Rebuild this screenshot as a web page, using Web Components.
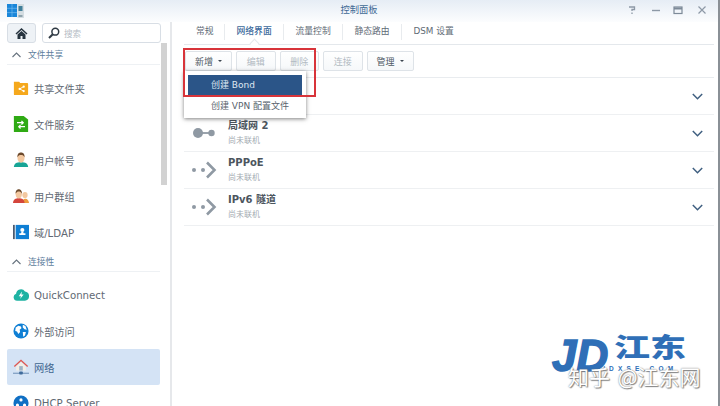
<!DOCTYPE html>
<html lang="zh">
<head>
<meta charset="utf-8">
<title>控制面板</title>
<style>
  html, body { margin: 0; padding: 0; background: #fff; }
  body { width: 720px; height: 406px; overflow: hidden; font-family: "DejaVu Sans", "Noto Sans CJK SC", sans-serif; font-size: 10px; color: #505a64; }
</style>
</head>
<body>
<template id="t-window">
  <style>
    :host { display: flex; flex-direction: column; position: relative; width: 718px; height: 406px; border-right: 2px solid #8a9096; overflow: hidden; background: #fff; }
    .body { display: flex; flex: 1; min-height: 0; }
  </style>
  <slot name="title"></slot>
  <div class="body"><slot></slot></div>
  <slot name="over"></slot>
</template>

<template id="t-titlebar">
  <style>
    :host { display: flex; align-items: center; height: 22px; flex: none; padding: 0 11px 0 7px; background: linear-gradient(#e6edf5, #fcfdfe); position: relative; }
    .name { position: absolute; left: 0; right: 0; top: 3px; text-align: center; font-size: 9.300px; line-height: 14px; color: #3f6a95; }
    .logo { position: relative; top: -.5px; }
    .tools { margin-left: auto; display: flex; position: relative; top: -1px; }
    svg { display: block; }
  </style>
  <svg class="logo" width="17" height="14" viewBox="0 0 17 14">
    <rect x="0" y="0" width="10" height="13" fill="#1a86d9"/>
    <path d="M0 4.300h10M0 8.600h10M5 0v13" stroke="#7cc0f0" stroke-width=".6"/>
    <rect x="10.500" y="0" width="6.500" height="14" fill="#d4dde2"/>
    <rect x="11.500" y="2" width="4" height="5" fill="#3f7f9a"/>
    <rect x="11.500" y="11" width="4" height="2" fill="#8fa3ad"/>
  </svg>
  <div class="name">控制面板</div>
  <div class="tools">
    <svg style="margin-right:13px" width="10" height="10" viewBox="0 0 10 10" fill="none" stroke="#8d99a6" stroke-width="1.300"><path d="M2 2h5.500v2.500H5v1.500M5 7.500v1.500"/></svg>
    <svg style="margin-right:11px" width="12" height="10" viewBox="0 0 12 10" fill="none" stroke="#8d99a6" stroke-width="1.400"><path d="M2 5.500h8"/></svg>
    <svg style="margin-right:14px" width="10" height="10" viewBox="0 0 10 10" fill="none" stroke="#7d8a98" stroke-width="1.200"><rect x="1" y="2" width="8" height="6.500"/><path d="M1 3.500h8" stroke-width="2"/></svg>
    <svg width="10" height="10" viewBox="0 0 10 10" fill="none" stroke="#8d99a6" stroke-width="1.200"><path d="M1.500 1.500l7 7M8.500 1.500l-7 7"/></svg>
  </div>
</template>

<template id="t-sidebar">
  <style>
    :host { display: block; flex: none; width: 172px; height: 384px; box-sizing: border-box; border-right: 2px solid #e6e8eb; position: relative; overflow: hidden; }
    .top { display: flex; gap: 6px; padding: 1px 0 0 7px; height: 21px; box-sizing: border-box; }
    .home, .search { box-sizing: border-box; height: 20px; border: 1px solid #d8dee5; border-radius: 3px; display: flex; align-items: center; }
    .home { width: 29px; justify-content: center; background: #eef2f6; }
    .search { width: 119px; padding-left: 5px; gap: 4px; color: #b3bbc4; font-size: 8.600px; background: #fff; }
    .list { width: 153px; margin-left: 7px; }
    .thumb { position: absolute; left: 161px; top: 21px; width: 6px; height: 142px; background: #d2d2d2; }
    svg { display: block; }
  </style>
  <div class="top">
    <div class="home"><svg width="13" height="13" viewBox="0 0 13 13"><path d="M6.500 1L0.500 6.500l1 1 5-4.500 5 4.500 1-1z" fill="#27343f"/><path d="M2.500 7.500l4-3.500 4 3.500V12H7.500V9h-2v3h-3z" fill="#27343f"/></svg></div>
    <div class="search"><svg width="12" height="12" viewBox="0 0 12 12" fill="none" stroke="#2f3a44" stroke-width="1.500"><circle cx="7.300" cy="4.700" r="3.400"/><path d="M4.800 7.200L1 11" stroke-width="2"/></svg><span>搜索</span></div>
  </div>
  <div class="list"><slot></slot></div>
  <div class="thumb"></div>
</template>

<template id="t-section">
  <style>
    :host { display: flex; align-items: center; gap: 7px; height: 22px; margin-bottom: 5px; box-sizing: border-box; padding: 2px 0 0 5px; border-bottom: 1px solid #eef1f4; color: #5d7e9c; font-size: 8.800px; }
    svg { display: block; }
  </style>
  <svg width="9" height="6" viewBox="0 0 9 6" fill="none" stroke="#66727e" stroke-width="1.100"><path d="M.5 5L4.500 1l4 4"/></svg>
  <slot></slot>
</template>

<template id="t-navitem">
  <style>
    :host { display: flex; align-items: center; gap: 5px; height: 36px; box-sizing: border-box; padding-left: 6px; font-size: 10.200px; color: #5f6973; border-radius: 2px; white-space: nowrap; }
    :host([selected]) { background: #d4e3f5; color: #3f6690; }
    .ic { width: 16px; height: 16px; flex: none; }
    ::slotted(svg) { display: block; width: 16px; height: 16px; }
  </style>
  <div class="ic"><slot name="icon"></slot></div>
  <slot></slot>
</template>

<template id="t-tabs">
  <style>
    :host { display: flex; align-items: center; height: 23px; box-sizing: border-box; border-bottom: 1px solid #e4e8ec; margin: 0 4px 0 12px; position: relative; padding-bottom: 2px; }
  </style>
  <slot></slot>
</template>

<template id="t-tab">
  <style>
    :host { display: block; position: relative; box-sizing: border-box; height: 16px; line-height: 15px; padding: 0 11.400px; font-size: 8.800px; color: #5f6b76; border-left: 1px solid #e8ebee; white-space: nowrap; }
    :host([first]) { border-left: 0; padding-left: 12px; padding-right: 10.500px; }
    :host([active]) { color: #3c6a9c; font-weight: 500; }
    :host([active])::after { content: ""; position: absolute; left: 50%; bottom: -7px; width: 6px; height: 6px; margin-left: -3px; background: #fff; border: 1px solid #e4e8ec; border-width: 1px 0 0 1px; transform: rotate(45deg); }
  </style>
  <slot></slot>
</template>

<template id="t-toolbar">
  <style>
    :host { display: flex; gap: 4px; height: 33px; box-sizing: border-box; padding: 6px 0 0 1px; border-bottom: 1px solid #e9ecef; margin-right: 4px; }
  </style>
  <slot></slot>
</template>

<template id="t-btn">
  <style>
    :host { display: flex; align-items: center; justify-content: center; gap: 5px; box-sizing: border-box; height: 20px; width: 39.500px; border: 1px solid #dee3e8; border-radius: 2px; background: linear-gradient(#fff, #f6f8fa); color: #4f5a65; font-size: 9px; white-space: nowrap; }
    :host([disabled]) { color: #b2bac2; }
    :host([menu]) { width: 47px; }
    .car { display: none; width: 0; height: 0; border: 2.500px solid transparent; border-top-color: #3c4650; border-bottom: 0; }
    :host([menu]) .car { display: block; }
  </style>
  <slot></slot><span class="car"></span>
</template>

<template id="t-row">
  <style>
    :host { display: flex; align-items: center; height: 37px; box-sizing: border-box; border-bottom: 1px solid #eef0f2; margin-right: 4px; padding: 0 11px 0 7px; }
    .ic { width: 26px; height: 20px; flex: none; margin-right: 11px; }
    .txt { flex: 1; display: flex; flex-direction: column; gap: 3px; margin-top: -1px; }
    .t { font-size: 10px; line-height: 13px; font-weight: 600; color: #4c555e; }
    .s { font-size: 8px; line-height: 11px; color: #a4abb2; }
    ::slotted(svg) { display: block; }
    svg { display: block; }
  </style>
  <div class="ic"><slot name="icon"></slot></div>
  <div class="txt"><div class="t"><slot></slot></div><div class="s"><slot name="sub"></slot></div></div>
  <svg width="11" height="7" viewBox="0 0 11 7" fill="none" stroke="#3f5f80" stroke-width="1.500"><path d="M.8 1l4.700 4.700L10.200 1"/></svg>
</template>

<template id="t-menu">
  <style>
    :host { position: absolute; left: 184px; top: 71px; width: 122px; height: 47px; box-sizing: border-box; padding: 4px 4px 0; background: #fff; box-shadow: 0 1px 4px rgba(0,0,0,.5); }
    .i { height: 20px; line-height: 20px; padding-left: 23px; font-size: 9px; color: #59636d; white-space: nowrap; }
    .i.on { background: #2b5588; color: #dfe8f2; }
    .i + .i { line-height: 22px; }
  </style>
  <div class="i on">创建 Bond</div>
  <div class="i">创建 VPN 配置文件</div>
</template>

<template id="t-mark">
  <style>
    :host { position: absolute; left: 552px; top: 335px; width: 160px; height: 60px; }
    .jd { position: absolute; left: 0; top: -4px; font: italic 700 44px/50px "Liberation Sans", sans-serif; color: #2f6fb7; -webkit-text-stroke: 1.500px #2f6fb7; }
    .dot { position: absolute; left: 39px; width: 4px; height: 4px; border-radius: 50%; background: #fff; }
    .cn { position: absolute; left: 62px; top: -3px; font: 900 36px/36px "Noto Sans CJK SC", sans-serif; color: #2f6fb7; white-space: nowrap; transform: scaleY(.74); transform-origin: 0 0; }
    .url { position: absolute; left: 51px; top: 30px; font: 700 6.500px/7px "Liberation Sans", sans-serif; letter-spacing: 4.200px; color: #2f6fb7; white-space: nowrap; }
    .wm { position: absolute; left: 16px; top: 27px; font: 400 21px/28px "Noto Sans CJK SC", sans-serif; word-spacing: 3px; color: #fff; text-shadow: 0 0 1.500px #666, 1px 1px 1px #888; white-space: nowrap; }
  </style>
  <div class="jd">JD</div>
  <div class="dot" style="top:13px"></div>
  <div class="dot" style="top:21px"></div>
  <div class="cn">江东</div>
  <div class="url">/DXSE.COM</div>
  <div class="wm">知乎 @江东网</div>
</template>

<template id="t-callout">
  <style>
    :host { position: absolute; left: 183px; top: 48px; width: 133px; height: 49px; box-sizing: border-box; border: 2px solid #d8343a; }
  </style>
</template>

<script>
  // every element is the same: clone its template into an open shadow root
  function define(tag, tpl) {
    customElements.define(tag, class extends HTMLElement {
      constructor() {
        super();
        this.attachShadow({mode: 'open'}).appendChild(document.getElementById(tpl).content.cloneNode(true));
      }
    });
  }
  define('dsm-window', 't-window');
  define('dsm-titlebar', 't-titlebar');
  define('dsm-sidebar', 't-sidebar');
  define('dsm-section', 't-section');
  define('dsm-navitem', 't-navitem');
  define('dsm-tabs', 't-tabs');
  define('dsm-tab', 't-tab');
  define('dsm-toolbar', 't-toolbar');
  define('dsm-btn', 't-btn');
  define('dsm-row', 't-row');
  define('dsm-menu', 't-menu');
  define('dsm-mark', 't-mark');
  define('dsm-callout', 't-callout');
</script>

<dsm-window>
  <dsm-titlebar slot="title"></dsm-titlebar>
  <dsm-sidebar>
    <dsm-section>文件共享</dsm-section>
    <dsm-navitem>
      <svg slot="icon" viewBox="0 0 18 18"><path d="M1 2h6l1 1.500h8a1 1 0 0 1 1 1V16a1 1 0 0 1-1 1H2a1 1 0 0 1-1-1z" fill="#f5a81c"/><path d="M12 7.500L7.500 10l4.500 2.500" fill="none" stroke="#fff" stroke-width="1"/><circle cx="12" cy="7.500" r="1.300" fill="#fff"/><circle cx="7.500" cy="10" r="1.300" fill="#fff"/><circle cx="12" cy="12.500" r="1.300" fill="#fff"/></svg>
      共享文件夹
    </dsm-navitem>
    <dsm-navitem>
      <svg slot="icon" viewBox="0 0 18 18"><path d="M1 0h11l5 4v14H1z" fill="#2faa14"/><path d="M4.500 7.500h7M9.500 5.500l2 2-2 2M13.500 12h-7M8.500 10l-2 2 2 2" fill="none" stroke="#fff" stroke-width="1.400"/></svg>
      文件服务
    </dsm-navitem>
    <dsm-navitem>
      <svg slot="icon" viewBox="0 0 18 18"><path d="M1 17c0-4 3-5.500 8-5.500s8 1.500 8 5.500z" fill="#18a596"/><ellipse cx="9" cy="6.500" rx="4" ry="5.500" fill="#f3c8a0"/><path d="M5 6c-.5-4 2-5.500 4-5.500S13.500 2 13 6c-1-2-2-2.500-4-2.500S6 4 5 6z" fill="#6d4a2c"/></svg>
      用户帐号
    </dsm-navitem>
    <dsm-navitem>
      <svg slot="icon" viewBox="0 0 18 18"><path d="M10 17c0-3 2-5 4-5s4 2 4 5z" fill="#ee9a3c"/><ellipse cx="13.500" cy="8" rx="3" ry="3.500" fill="#f3c8a0"/><path d="M0 17c0-4 3-5.500 6.500-5.500S13 13 13 17z" fill="#d4453c"/><ellipse cx="6.500" cy="7" rx="3.500" ry="4.500" fill="#f3c8a0"/><path d="M3 6.500C2.500 3 5 1.500 6.500 1.500S10.500 3 10 6.500C9 4.500 8 4 6.500 4S4 4.500 3 6.500z" fill="#6d4a2c"/></svg>
      用户群组
    </dsm-navitem>
    <dsm-navitem>
      <svg slot="icon" viewBox="0 0 18 18"><rect x="0" y="1" width="2" height="16" fill="#4a5a70"/><rect x="3" y="1" width="15" height="16" fill="#0f7fd4"/><circle cx="10.500" cy="6.800" r="2.300" fill="#fff"/><path d="M9.500 9h2l.5 1.500h2V12.500H7V10.500h2z" fill="#fff"/></svg>
      域/LDAP
    </dsm-navitem>
    <dsm-section>连接性</dsm-section>
    <dsm-navitem>
      <svg slot="icon" viewBox="0 0 18 18"><path d="M4.500 15.500a4 4 0 0 1-1-7.800A5.500 5.500 0 0 1 13.500 5a5.300 5.300 0 0 1 0 10.500z" fill="#1fb3a3"/><path d="M10 5L6.500 10.500h2.500L8 13.500l4-5H9.500z" fill="#fff"/></svg>
      QuickConnect
    </dsm-navitem>
    <dsm-navitem>
      <svg slot="icon" viewBox="0 0 18 18"><circle cx="9" cy="9" r="8.500" fill="#0f7fd4"/><path d="M3 5l3-2 3 1 .5 2-2 1.500.5 2.500-2 2.500-1.500-3L2.500 9zM11 2l3 1.500 1.500 4-2.500-.5-2-2zM11 10l3.500 0-1 4-2 1.500z" fill="#fff"/></svg>
      外部访问
    </dsm-navitem>
    <dsm-navitem selected>
      <svg slot="icon" viewBox="0 0 18 18"><path d="M9 .5L1 8l1 1 7-6.500L16 9l1-1z" fill="#e0574f"/><path d="M3.500 8.500L9 3.500l5.500 5V13h-11z" fill="#f2efe6"/><rect x="7" y="8" width="4" height="5" fill="#9db3c6"/><path d="M0 16h18" stroke="#3f6b9b" stroke-width=".8"/><rect x="7" y="14" width="4" height="3.500" rx=".8" fill="#3f6b9b"/></svg>
      网络
    </dsm-navitem>
    <dsm-navitem>
      <svg slot="icon" viewBox="0 0 18 18"><circle cx="9" cy="9" r="8.500" fill="#0f6fc4"/><circle cx="9" cy="5.500" r="1.800" fill="#fff"/><circle cx="5" cy="11.500" r="1.800" fill="#fff"/><circle cx="13" cy="11.500" r="1.800" fill="#fff"/></svg>
      DHCP Server
    </dsm-navitem>
  </dsm-sidebar>

  <div style="flex:1;min-width:0;">
    <dsm-tabs>
      <dsm-tab first>常规</dsm-tab>
      <dsm-tab active>网络界面</dsm-tab>
      <dsm-tab>流量控制</dsm-tab>
      <dsm-tab>静态路由</dsm-tab>
      <dsm-tab>DSM 设置</dsm-tab>
    </dsm-tabs>
    <div style="margin-left:12px;">
      <dsm-toolbar>
        <dsm-btn menu>新增</dsm-btn>
        <dsm-btn disabled>编辑</dsm-btn>
        <dsm-btn disabled>删除</dsm-btn>
        <dsm-btn disabled>连接</dsm-btn>
        <dsm-btn menu>管理</dsm-btn>
      </dsm-toolbar>
      <dsm-row></dsm-row>
      <dsm-row>
        <svg slot="icon" width="26" height="20" viewBox="0 0 26 20"><circle cx="7" cy="10" r="5" fill="#8f99a3"/><circle cx="20.500" cy="10" r="3.200" fill="#8f99a3"/><path d="M11 10h8" stroke="#8f99a3" stroke-width="1.800"/></svg>
        局域网 2
        <span slot="sub">尚未联机</span>
      </dsm-row>
      <dsm-row>
        <svg slot="icon" width="26" height="20" viewBox="0 0 26 20"><circle cx="3" cy="10" r="2" fill="#8f99a3"/><circle cx="12" cy="10" r="2" fill="#8f99a3"/><path d="M16 2.500l7.500 7.500-7.500 7.500" fill="none" stroke="#8f99a3" stroke-width="2.600"/></svg>
        PPPoE
        <span slot="sub">尚未联机</span>
      </dsm-row>
      <dsm-row>
        <svg slot="icon" width="26" height="20" viewBox="0 0 26 20"><circle cx="3" cy="10" r="2" fill="#8f99a3"/><circle cx="12" cy="10" r="2" fill="#8f99a3"/><path d="M16 2.500l7.500 7.500-7.500 7.500" fill="none" stroke="#8f99a3" stroke-width="2.600"/></svg>
        IPv6 隧道
        <span slot="sub">尚未联机</span>
      </dsm-row>
    </div>
  </div>
  <dsm-menu slot="over"></dsm-menu>
  <dsm-callout slot="over"></dsm-callout>
  <dsm-mark slot="over"></dsm-mark>
</dsm-window>
</body>
</html>
